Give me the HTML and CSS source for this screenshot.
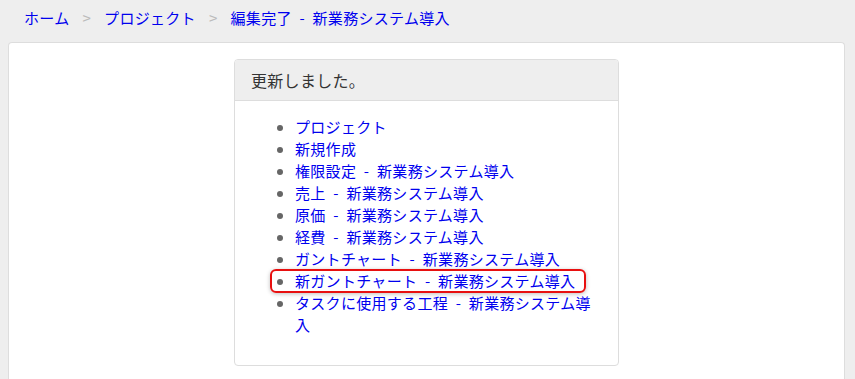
FILE: index.html
```html
<!DOCTYPE html>
<html lang="ja">
  <head>
    <meta charset="UTF-8" />
    <title>編集完了 - 新業務システム導入</title>
    <link rel="stylesheet" href="styles.css">
  </head>
  <body>
    <nav class="breadcrumb">
      <a href="#">ホーム</a>
      <span class="sep">&gt;</span>
      <a href="#">プロジェクト</a>
      <span class="sep">&gt;</span>
      <a href="#">編集完了 - 新業務システム導入</a>
    </nav>

    <div class="page-panel">
      <div class="result-card">
        <div class="result-header">更新しました。</div>
        <div class="result-body">
          <ul class="link-list">
            <li><a href="#">プロジェクト</a></li>
            <li><a href="#">新規作成</a></li>
            <li><a href="#">権限設定 - 新業務システム導入</a></li>
            <li><a href="#">売上 - 新業務システム導入</a></li>
            <li><a href="#">原価 - 新業務システム導入</a></li>
            <li><a href="#">経費 - 新業務システム導入</a></li>
            <li><a href="#">ガントチャート - 新業務システム導入</a></li>
            <li class="marked"><a href="#">新ガントチャート - 新業務システム導入</a></li>
            <li><a href="#">タスクに使用する工程 - 新業務システム導入</a></li>
          </ul>
        </div>
      </div>
    </div>
  </body>
</html>
```

FILE: styles.css
```css
* {
  box-sizing: border-box;
}

body {
  margin: 0;
  padding: 0 10px 0 8px;
  background: #eeeeee;
  font-family: "Noto Sans CJK JP", "Liberation Sans", sans-serif;
  font-size: 15px;
  letter-spacing: 0.3px;
  word-spacing: 4px;
  color: #333;
}

a {
  color: #0000ee;
  text-decoration: none;
}

.breadcrumb {
  height: 36px;
  padding: 0 16px;
  display: flex;
  align-items: center;
  line-height: 20px;
}

.breadcrumb .sep {
  color: #bbb;
  margin: 0 13px;
}

.page-panel {
  margin-top: 6px;
  background: #fff;
  border: 1px solid #ddd;
  border-bottom: none;
  border-radius: 4px 4px 0 0;
  min-height: 340px;
  padding-top: 16px;
}

.result-card {
  width: 385px;
  margin: 0 auto;
  border: 1px solid #ddd;
  border-radius: 4px;
}

.result-header {
  background: #eeeeee;
  border-bottom: 1px solid #ddd;
  border-radius: 3px 3px 0 0;
  padding: 10px 16px;
  font-size: 16px;
  line-height: 20px;
  color: #333;
}

.result-body {
  padding: 15px 20px 29px;
}

.link-list {
  margin: 0;
  padding-left: 40px;
  line-height: 22px;
}

.link-list li::marker {
  color: #666;
}

.link-list li.marked {
  position: relative;
}

.link-list li.marked::before {
  content: "";
  position: absolute;
  left: -25px;
  right: 12px;
  top: -1px;
  bottom: -1px;
  border: 2px solid #e81010;
  border-radius: 6px;
  box-shadow: 0 1px 4px rgba(0, 0, 0, 0.25);
}
```
